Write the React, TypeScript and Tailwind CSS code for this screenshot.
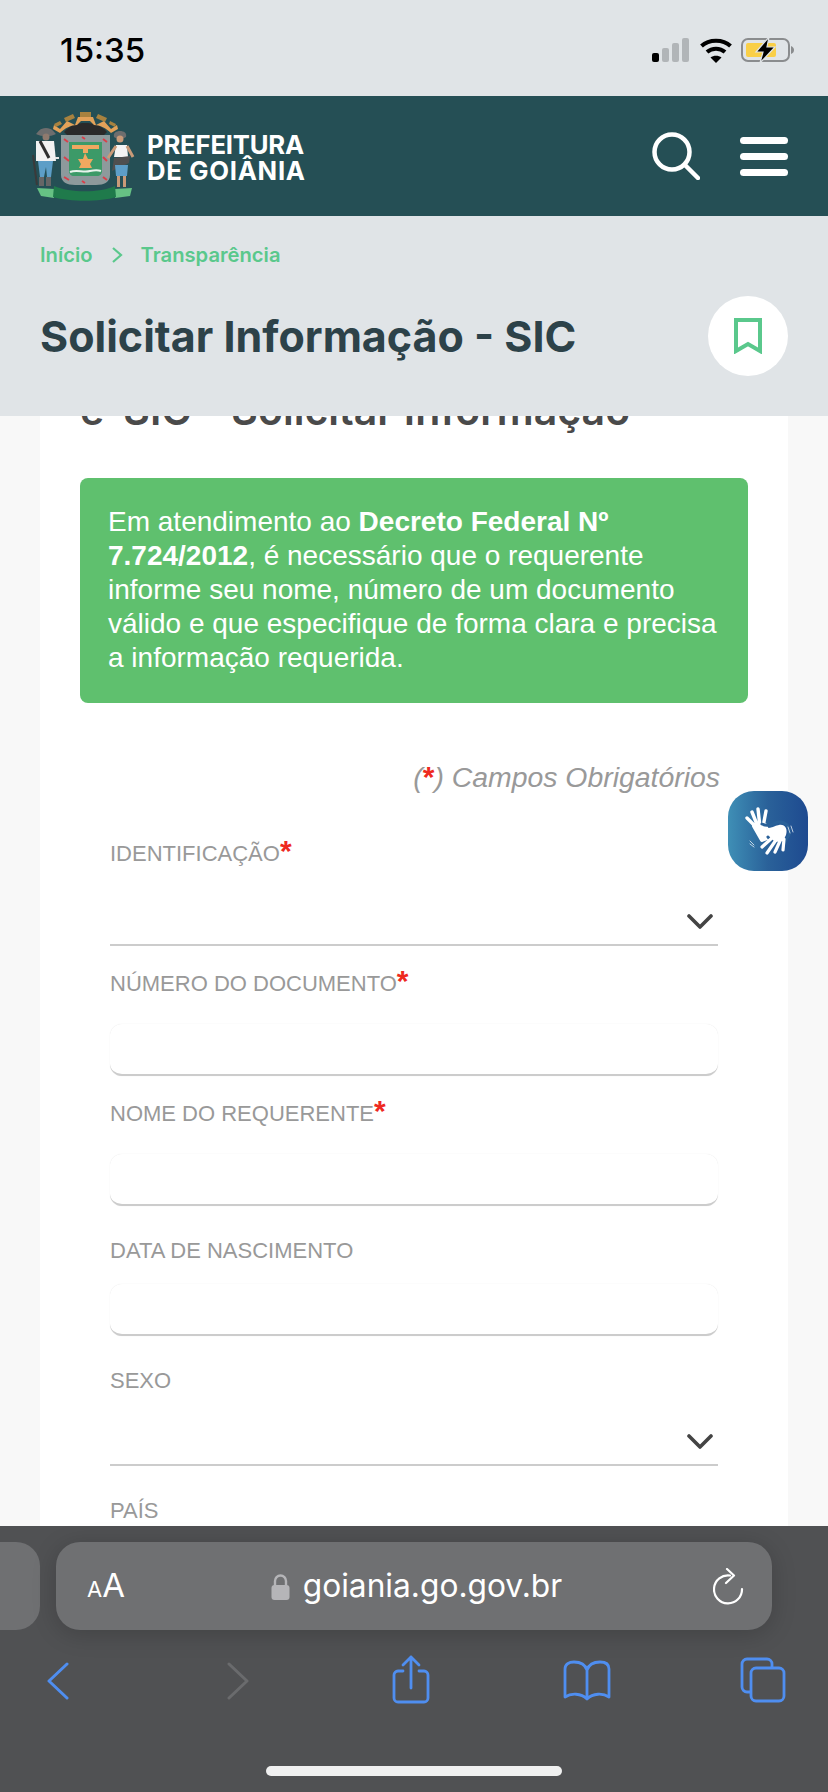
import type { ReactNode } from "react";

// Brasao da prefeitura, desenhado em escala 1:1
function Brasao() {
  return (
    <svg width="130" height="110" viewBox="0 0 130 110" className="block">
      {/* coroa */}
      <path d="M44 31 C50 24 58 22 65 22 C73 22 81 24 87 31 L84 34 L47 34 Z" fill="#2a2a2a" />
      <path d="M34 24 L40 28 L47 20 L55 24 L58 16 H73 L76 24 L84 20 L91 28 L97 24 L98 28 L91 32 C86 27 80 24 74 24 L70 20 H61 L57 24 C51 24 45 27 40 32 L33 28 Z" fill="#e3a259" />
      <rect x="60" y="11" width="11" height="5" fill="#a8823f" />
      <path d="M44 17 L53 13 L55 17 L46 21 Z M78 13 L87 17 L85 21 L76 17 Z" fill="#a8823f" />
      <path d="M34 23 L40 20 L42 23 L36 26 Z M90 20 L96 23 L95 26 L89 23 Z" fill="#a8823f" />
      {/* escudo */}
      <path d="M41 34 H90 V74 C90 81 84 84 76 84 H55 C47 84 41 81 41 74 Z" fill="#8d9a9c" />
      <path d="M49 41 H82 V70 C82 73 80 75 77 75 H54 C51 75 49 73 49 70 Z" fill="#3c9a68" />
      <path d="M52 44 H79 V48 H68 V52 H63 V48 H52 Z" fill="#f0a860" />
      <path d="M65 52 L68 58 L73 58 L70 63 L72 67 H59 L61 63 L58 58 L63 58 Z" fill="#f0a860" />
      <path d="M50 71 C57 68 63 72 70 70 C75 69 78 69 81 70" stroke="#e8f3ec" strokeWidth="2" fill="none" />
      <path d="M44 56 L49 60 M44 38 L48 41 M83 38 L87 41 M83 56 L87 60 M44 76 L49 79 M83 76 L87 79 M62 36 L65 38 M62 80 L65 82" stroke="#d8404a" strokeWidth="2" />
      {/* homem esquerdo */}
      <path d="M16 33 C18 31 20 27 26 27 C32 27 34 31 36 33 C30 36 22 36 16 33 Z" fill="#6e6e6e" />
      <circle cx="26" cy="36" r="3.5" fill="#8f7a6e" />
      <path d="M16 40 H34 L36 60 H16 Z" fill="#f2f2f2" />
      <path d="M20 40 L29 57" stroke="#2f2f2f" strokeWidth="3" />
      <path d="M18 60 H33 L31 76 H27 L26 66 L24 76 H20 Z" fill="#5d9ec7" />
      <rect x="19" y="76" width="5" height="9" fill="#666" />
      <rect x="26" y="76" width="5" height="9" fill="#666" />
      <path d="M13 54 L17 84" stroke="#3a3a3a" strokeWidth="2" />
      <path d="M35 57 L39 57" stroke="#e6e6e6" strokeWidth="2" />
      {/* homem direito */}
      <path d="M94 36 C93 32 96 30 100 30 C104 30 107 32 106 36 C103 38 97 38 94 36 Z" fill="#6e6e6e" />
      <circle cx="100" cy="38" r="3.5" fill="#c99a78" />
      <path d="M96 44 H107 L108 56 H94 Z" fill="#f4f4f4" />
      <path d="M96 45 L88 57 M107 45 L113 56" stroke="#c99a78" strokeWidth="3" />
      <path d="M94 57 L110 55 L109 62 L92 70 Z" fill="#4f4f4f" />
      <path d="M95 64 H108 L107 75 H96 Z" fill="#5d9ec7" />
      <rect x="97" y="75" width="3" height="11" fill="#c99a78" />
      <rect x="103" y="75" width="3" height="11" fill="#c99a78" />
      {/* faixa */}
      <path d="M17 87 L35 88 L34 97 L21 95 Z M94 88 L112 87 L110 95 L95 97 Z" fill="#66c184" />
      <path d="M34 85 C50 92 80 92 95 85 L96 96 C80 101 50 101 33 96 Z" fill="#1f7a4b" />
    </svg>
  );
}

function IconeLibras() {
  return (
    <svg width="80" height="80" viewBox="0 0 80 80" fill="none" strokeLinecap="round">
      {/* mao de tras */}
      <g stroke="white">
        <path d="M29 37 L19 27 M30 36 L24 21 M32 36 L30 18 M35 36 L38 20" strokeWidth="3.4" />
        <path d="M26 35 L37 34 L42 46 L34 49 Z" fill="white" strokeWidth="4" strokeLinejoin="round" />
      </g>
      {/* mao da frente */}
      <path d="M34 33 C40 36 44 33 50 31 C58 30 63 36 61 44 L56 52 L46 53 L40 46" stroke="#2a6199" strokeWidth="3" />
      <path d="M37 37 C42 38 46 35 51 34 C57 33 60 38 58 44 L55 50 L47 51 L42 46 Z" fill="white" />
      <path d="M44 47 L34 56 M48 49 L39 62 M52 50 L47 61 M56 48 L55 59" stroke="white" strokeWidth="3.2" />
      {/* marcas de movimento */}
      <path d="M60 36 L62 42 M63 35 L65 41 M22 50 L26 54 M22 53 L26 56" stroke="white" strokeWidth="1" opacity="0.7" />
    </svg>
  );
}

function Chevron() {
  return (
    <svg width="26" height="16" viewBox="0 0 26 16" fill="none" stroke="#444" strokeWidth="3.6" strokeLinecap="round" strokeLinejoin="round">
      <path d="M2 2 L13 13 L24 2" />
    </svg>
  );
}

function Campo({ label, obrigatorio, select }: { label: string; obrigatorio?: boolean; select?: boolean }) {
  return (
    <div className="h-[130px] flex flex-col justify-end">
      <label className={`h-[26px] text-[22px] leading-[26px] text-[#999] ${obrigatorio ? "mb-[27px]" : "mb-[20px]"}`}>
        {label}
        {obrigatorio && <span className="text-[#ee2a1f] text-[30px] leading-[20px] font-bold">*</span>}
      </label>
      {select ? (
        <div className="h-[52px] shrink-0 border-b-2 border-[#ccc] flex items-center justify-end pr-[5px] pt-[6px]">
          <Chevron />
        </div>
      ) : (
        <input className="h-[52px] shrink-0 w-full bg-white rounded-[12px] border-b-2 border-[#ccc] shadow-[0_0_1px_rgba(0,0,0,0.12)]" />
      )}
    </div>
  );
}

function NavIcone({ children, className }: { children: ReactNode; className: string }) {
  return <div className={className}>{children}</div>;
}

export default function App() {
  return (
    <div className="relative w-[828px] h-[1792px] overflow-hidden flex flex-col bg-[#f8f8f8] font-['Liberation_Sans',sans-serif]">
      {/* Barra de status */}
      <div className="h-[96px] shrink-0 bg-[#e0e4e7] flex items-start justify-between pl-[60px] pr-[33px] pt-[30px] font-['Inter',sans-serif]">
        <span className="text-[33px] leading-[40px] font-medium text-black">15:35</span>
        <div className="flex items-center gap-[10px] pt-[7px]">
          <svg width="38" height="24" viewBox="0 0 38 24" className="ml-[1px]">
            <rect x="0" y="15" width="7" height="9" rx="2" fill="#000" />
            <rect x="10" y="10" width="7" height="14" rx="2" fill="#b1b5b8" />
            <rect x="20" y="5" width="7" height="19" rx="2" fill="#b1b5b8" />
            <rect x="30" y="0" width="7" height="24" rx="2" fill="#b1b5b8" />
          </svg>
          <svg width="32" height="25" viewBox="0 0 32 25" fill="none" stroke="#000" strokeWidth="4">
            <path d="M1.5 8 C9 1 23 1 30.5 8" />
            <path d="M7 14 C12 9.5 20 9.5 25 14" />
            <path d="M16 25 L10.5 19.5 C13.5 17 18.5 17 21.5 19.5 Z" fill="#000" stroke="none" />
          </svg>
          <svg width="54" height="26" viewBox="0 0 54 26" className="-ml-[1px]">
            <rect x="1" y="2" width="47" height="22" rx="6" fill="none" stroke="#8a8c8e" strokeWidth="2" />
            <rect x="5" y="6" width="30" height="14" rx="2" fill="#f9cf47" />
            <path d="M50 9 C52 10 53 11 53 13 C53 15 52 16 50 17 Z" fill="#8a8c8e" />
            <path d="M28 0 L15 15 H22 L19 26 L34 10 H26 Z" fill="#000" stroke="#e0e4e7" strokeWidth="1.2" />
          </svg>
        </div>
      </div>

      {/* Cabecalho */}
      <header className="h-[120px] shrink-0 bg-[#254f55] flex items-center justify-between pl-[20px] pr-[40px]">
        <div className="flex items-center">
          <Brasao />
          <div className="-ml-[3px] font-['Inter',sans-serif] font-bold text-white text-[25.7px] leading-[26px] mt-[4px]">
            <div className="tracking-[-0.2px]">PREFEITURA</div>
            <div className="tracking-[0.7px]">DE GOIÂNIA</div>
          </div>
        </div>
        <div className="flex items-center gap-[40px]">
          <svg width="48" height="48" viewBox="0 0 48 48" fill="none" stroke="white" strokeWidth="4.5" strokeLinecap="round">
            <circle cx="20" cy="20" r="17.5" />
            <path d="M33 33 L46 46" />
          </svg>
          <div className="w-[48px] flex flex-col gap-[9px]">
            <div className="h-[7px] rounded-full bg-white" />
            <div className="h-[7px] rounded-full bg-white" />
            <div className="h-[7px] rounded-full bg-white" />
          </div>
        </div>
      </header>

      {/* Titulo da pagina */}
      <div className="relative z-10 h-[200px] shrink-0 bg-[#e0e4e7] pl-[40px] pr-[40px] font-['Inter',sans-serif]">
        <div className="flex items-center pt-[16px] h-[62px] text-[20.2px] font-semibold text-[#5ac88c]">
          <span>Início</span>
          <svg width="12" height="18" viewBox="0 0 12 18" fill="none" stroke="#5ac88c" strokeWidth="2.2" className="mx-[18px]">
            <path d="M2 2 L10 9 L2 16" />
          </svg>
          <span>Transparência</span>
        </div>
        <div className="flex items-center justify-between mt-[18px]">
          <h1 className="text-[43px] leading-[80px] font-bold text-[#2d4249]">Solicitar Informação - SIC</h1>
          <div className="w-[80px] h-[80px] rounded-full bg-white flex items-center justify-center">
            <svg width="28" height="36" viewBox="0 0 28 36" fill="none" stroke="#5ac88c" strokeWidth="4">
              <path d="M2 2 H26 V33 L14 26 L2 33 Z" />
            </svg>
          </div>
        </div>
      </div>

      {/* Conteudo */}
      <main className="flex-1 min-h-0 overflow-hidden px-[40px]">
        <div className="bg-white px-[40px] -mt-[33px]">
          <h2 className="font-['Inter',sans-serif] text-[41px] leading-[54px] font-semibold text-[#4a4a4a]">e-SIC - Solicitar Informação</h2>
          <div className="mt-[41px] rounded-[8px] bg-[#5fc06e] px-[28px] pt-[27px] h-[225px] text-white text-[28px] leading-[34px]">
            Em atendimento ao <strong>Decreto Federal Nº 7.724/2012</strong>, é necessário que o requerente informe seu nome, número de um documento válido e que especifique de forma clara e precisa a informação requerida.
          </div>
          <div className="px-[30px]">
            <p className="mt-[56px] -mr-[2px] text-right italic text-[28.4px] leading-[36px] text-[#999]">
              (<span className="text-[#ee2a1f] font-bold not-italic text-[30px] leading-[20px]">*</span>) Campos Obrigatórios
            </p>
            <div className="mt-[21px]">
              <Campo label="IDENTIFICAÇÃO" obrigatorio select />
              <Campo label="NÚMERO DO DOCUMENTO" obrigatorio />
              <Campo label="NOME DO REQUERENTE" obrigatorio />
              <Campo label="DATA DE NASCIMENTO" />
              <Campo label="SEXO" select />
              <Campo label="PAÍS" select />
            </div>
          </div>
        </div>
      </main>

      {/* Botao VLibras */}
      <div className="absolute left-[728px] top-[791px] z-20 w-[80px] h-[80px] rounded-[26px] bg-gradient-to-r from-[#3f8fb6] via-[#2a6199] to-[#1e4a90]">
        <IconeLibras />
      </div>

      {/* Safari */}
      <div className="h-[266px] shrink-0 bg-[#505153] relative z-10">
        <div className="flex pt-[16px] h-[104px]">
          <div className="w-[40px] h-[88px] rounded-r-[24px] bg-[#6f7072]" />
          <div className="ml-[16px] w-[716px] h-[88px] rounded-[24px] bg-[#6f7072] shadow-[0_4px_24px_rgba(0,0,0,0.18)] flex items-center justify-between pl-[31px] pr-[27px] font-['Inter',sans-serif] text-white">
            <div className="flex items-baseline font-normal">
              <span className="text-[22px]">A</span>
              <span className="text-[33px]">A</span>
            </div>
            <div className="flex items-center gap-[13px] -ml-[5px]">
              <svg width="19" height="27" viewBox="0 0 19 27">
                <path d="M4 13 V8 A5.5 5.5 0 0 1 15 8 V13" fill="none" stroke="#b5b5b8" strokeWidth="2.4" />
                <rect x="0.5" y="12" width="18" height="15" rx="3" fill="#b5b5b8" />
              </svg>
              <span className="text-[31.7px] leading-[40px]">goiania.go.gov.br</span>
            </div>
            <svg width="32" height="37" viewBox="0 0 32 37" fill="none" stroke="white" strokeWidth="2.2" strokeLinecap="round" strokeLinejoin="round">
              <path d="M17 7.5 A14 14 0 1 0 29 21" />
              <path d="M14 1 L21 7.5 L13 15" />
            </svg>
          </div>
        </div>
        <div className="flex items-start pl-[47px] pt-[22px]">
          <NavIcone className="mt-[10px]">
            <svg width="22" height="38" viewBox="0 0 22 38" fill="none" stroke="#4f8ef0" strokeWidth="3" strokeLinecap="round" strokeLinejoin="round">
              <path d="M20 2 L2 19 L20 36" />
            </svg>
          </NavIcone>
          <NavIcone className="mt-[10px] ml-[158px]">
            <svg width="22" height="38" viewBox="0 0 22 38" fill="none" stroke="#6a6b6d" strokeWidth="3" strokeLinecap="round" strokeLinejoin="round">
              <path d="M2 2 L20 19 L2 36" />
            </svg>
          </NavIcone>
          <NavIcone className="ml-[143px] mt-[3px]">
            <svg width="38" height="49" viewBox="0 0 38 49" fill="none" stroke="#4f8ef0" strokeWidth="2.8" strokeLinecap="round" strokeLinejoin="round">
              <path d="M11 16 H6 A4 4 0 0 0 2 20 V43 A4 4 0 0 0 6 47 H32 A4 4 0 0 0 36 43 V20 A4 4 0 0 0 32 16 H27" />
              <path d="M19 33 V2 M11 10 L19 2 L27 10" />
            </svg>
          </NavIcone>
          <NavIcone className="ml-[133px] mt-[8px]">
            <svg width="48" height="41" viewBox="0 0 48 41" fill="none" stroke="#4f8ef0" strokeWidth="2.8" strokeLinecap="round" strokeLinejoin="round">
              <path d="M24 10 C22 4 17 2 11 2 C6 2 2 4 2 9 V37 C8 33 18 33 24 39 C30 33 40 33 46 37 V9 C46 4 42 2 37 2 C31 2 26 4 24 10 Z M24 10 V39" />
            </svg>
          </NavIcone>
          <NavIcone className="ml-[129px] mt-[5px]">
            <svg width="46" height="46" viewBox="0 0 46 46" fill="none" stroke="#4f8ef0" strokeWidth="2.8" strokeLinejoin="round">
              <path d="M11 35 H7 A5 5 0 0 1 2 30 V7 A5 5 0 0 1 7 2 H27 A5 5 0 0 1 32 7 V11" />
              <rect x="11" y="11" width="33" height="33" rx="5" />
            </svg>
          </NavIcone>
        </div>
        <div className="absolute left-[266px] top-[240px] w-[296px] h-[10px] rounded-full bg-[#f0f0f0]" />
      </div>
    </div>
  );
}
